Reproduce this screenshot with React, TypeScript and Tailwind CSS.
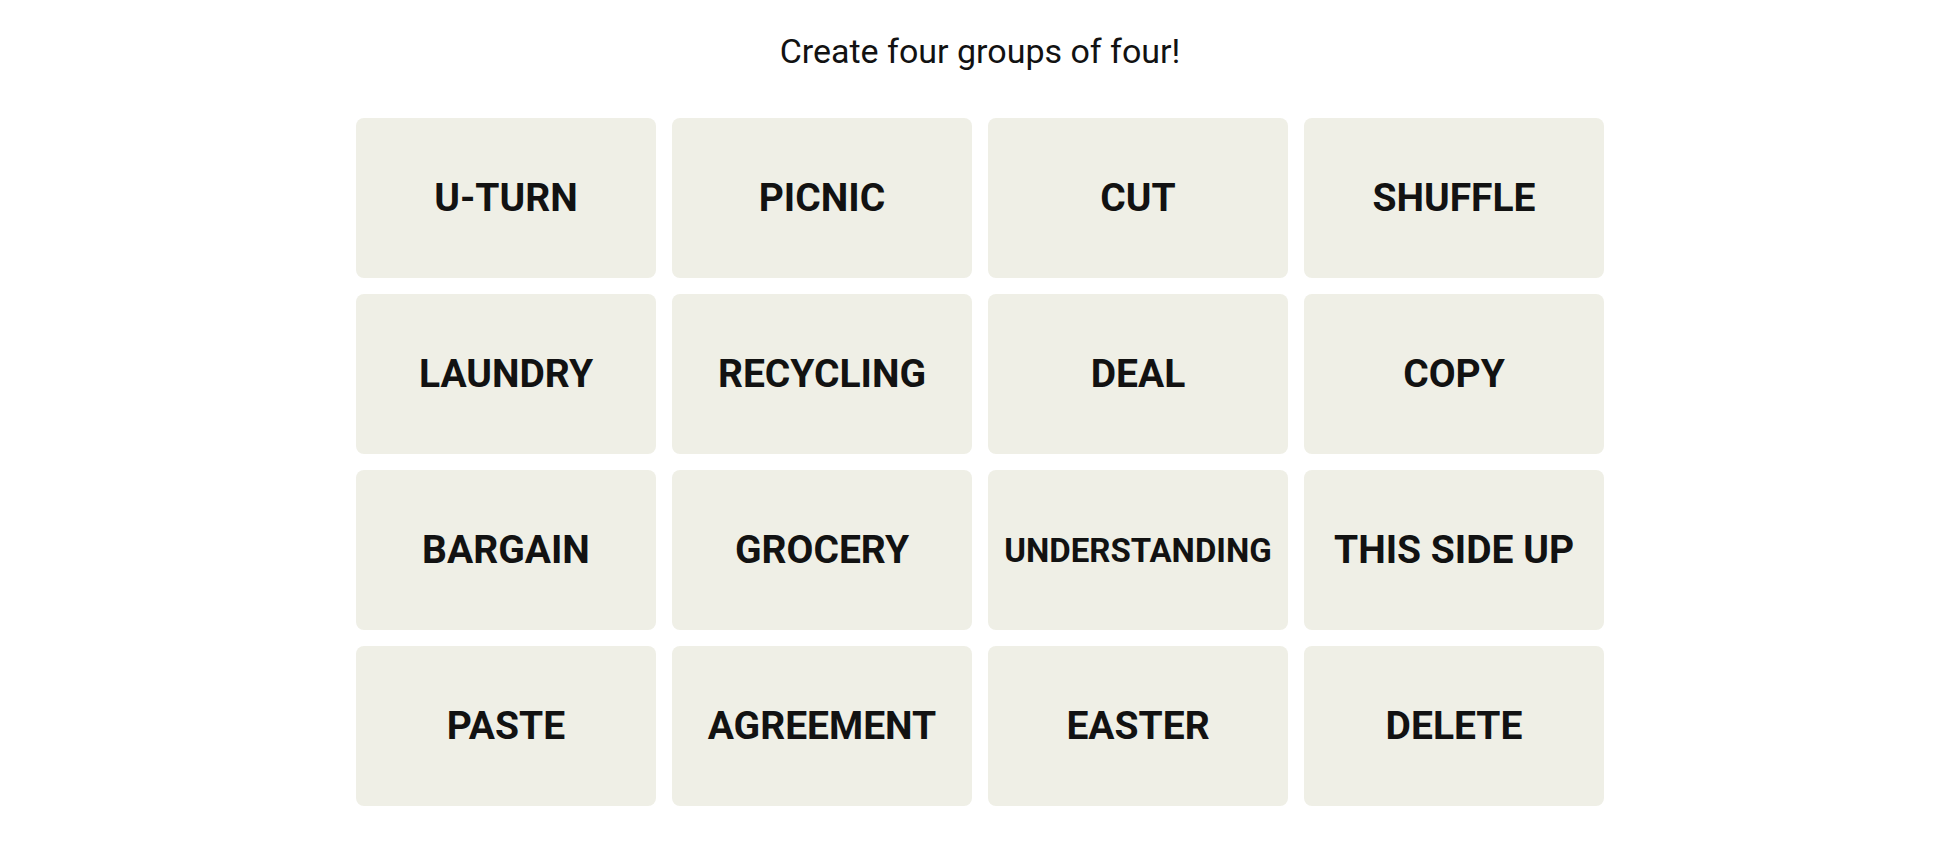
const words = [
  'U-TURN', 'PICNIC', 'CUT', 'SHUFFLE',
  'LAUNDRY', 'RECYCLING', 'DEAL', 'COPY',
  'BARGAIN', 'GROCERY', 'UNDERSTANDING', 'THIS SIDE UP',
  'PASTE', 'AGREEMENT', 'EASTER', 'DELETE',
];

function Tile({ word }: { word: string }) {
  // long words get shrunk so they fit on one line
  const small = word.length > 12;
  return (
    <button
      className={
        'h-[160px] w-[300px] rounded-lg bg-[#efefe6] flex items-center justify-center font-bold uppercase leading-none text-[#121212] ' +
        (small ? 'text-[33px]' : 'text-[39px]')
      }
    >
      {word}
    </button>
  );
}

export default function App() {
  return (
    <div
      className="min-h-screen bg-white flex flex-col items-center pl-[12px] pt-[31px]"
      style={{ fontFamily: 'Roboto, "Liberation Sans", sans-serif' }}
    >
      <p className="text-[34px] leading-[40px] text-[#121212]">Create four groups of four!</p>
      <div className="mt-[47px] grid grid-cols-4 gap-4">
        {words.map((w) => (
          <Tile key={w} word={w} />
        ))}
      </div>
    </div>
  );
}
